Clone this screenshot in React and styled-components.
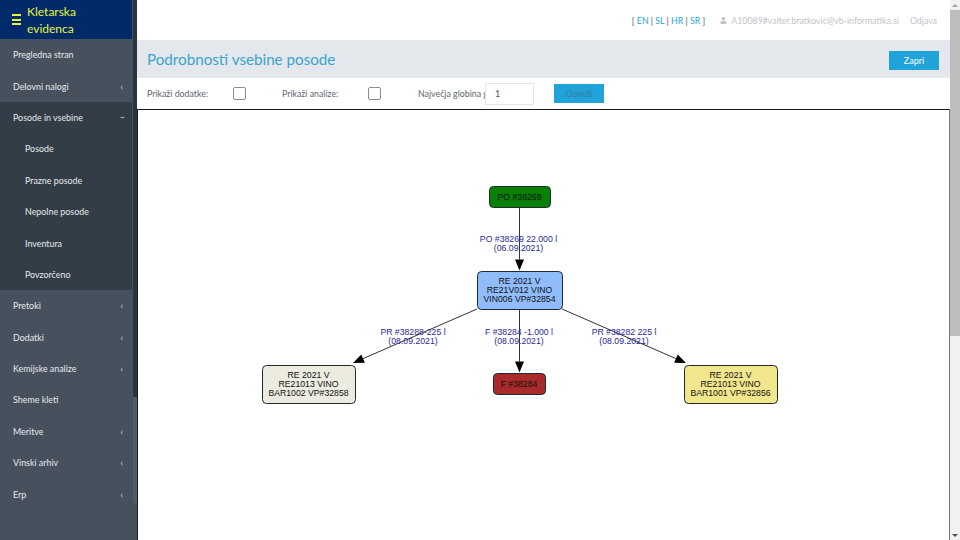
import React from "react";
import styled, { createGlobalStyle } from "styled-components";
import { FaUser } from "react-icons/fa";

const Global = createGlobalStyle`
  html, body {
    margin: 0;
    padding: 0;
    height: 100%;
    overflow: hidden;
    background: #fff;
    font-family: Lato, "Open Sans", "Liberation Sans", sans-serif;
  }
`;

const Page = styled.div`
  width: 960px;
  height: 540px;
  display: flex;
  overflow: hidden;
`;
const Sidebar = styled.aside`
  width: 132px;
  height: 540px;
  flex: none;
  background: #47515e;
  display: flex;
  flex-direction: column;
`;
const Brand = styled.div`
  height: 39px;
  flex: none;
  background: #012a6b;
  display: flex;
  align-items: center;
  gap: 6px;
  padding-left: 12px;
  color: #e8f53a;
  font-size: 12px;
  line-height: 17px;
`;
const Burger = styled.span`
  width: 9px;
  height: 7px;
  border-top: 2px solid #e8f53a;
  border-bottom: 2px solid #e8f53a;
  position: relative;
  &::after {
    content: "";
    position: absolute;
    left: 0;
    right: 0;
    top: 2.5px;
    height: 2px;
    background: #e8f53a;
  }
`;
const Item = styled.div`
  height: 31.4px;
  flex: none;
  display: flex;
  align-items: center;
  justify-content: space-between;
  padding: 0 9px 0 ${(p) => (p.$sub ? "25px" : "13px")};
  color: #e6e9ec;
  font-size: 8.9px;
  background: ${(p) => (p.$dark ? "#333d47" : "transparent")};
`;
const Caret = styled.span`
  font-size: 9px;
  color: #d5d9dd;
  display: inline-block;
  transform: ${(p) => (p.$open ? "rotate(-90deg)" : "none")};
`;
const SideBar = styled.div`
  width: 4px;
  flex: none;
  height: 540px;
  border-left: 1px solid #47515e;
  background: linear-gradient(#2c343d 0, #2c343d 397px, #525c69 397px, #525c69 503px, #47515e 503px);
`;
const Main = styled.main`
  flex: 1;
  min-width: 0;
  display: flex;
  flex-direction: column;
  height: 540px;
`;
const TopBar = styled.header`
  height: 40px;
  flex: none;
  display: flex;
  justify-content: flex-end;
  align-items: center;
  padding-right: 13px;
  font-size: 8.8px;
  color: #bfc4c9;
`;
const Langs = styled.span`
  color: #555;
  margin-right: 15px;
  & a {
    color: #2ba3d4;
  }
`;
const User = styled.span`
  display: flex;
  align-items: center;
  gap: 4px;
  margin-right: 11px;
`;
const TitleBar = styled.div`
  height: 38px;
  flex: none;
  background: #e4e8ec;
  display: flex;
  align-items: center;
  justify-content: space-between;
  padding: 0 11px 0 10px;
`;
const Title = styled.h1`
  margin: 0;
  font-weight: 400;
  font-size: 15.2px;
  color: #3aa3cf;
`;
const CloseButton = styled.button`
  width: 50px;
  height: 19px;
  margin-top: 3px;
  border: 0;
  padding: 0;
  background: #1fa3d8;
  color: #fff;
  font: inherit;
  font-size: 9px;
`;
const Filters = styled.div`
  height: 31px;
  flex: none;
  display: flex;
  align-items: center;
  padding-left: 10px;
  font-size: 8.8px;
  color: #5e666e;
`;
const FilterLabel = styled.span`
  width: ${(p) => p.$w}px;
  flex: none;
  white-space: nowrap;
  overflow: hidden;
`;
const Check = styled.span`
  box-sizing: border-box;
  width: 13px;
  height: 13px;
  flex: none;
  border: 1px solid #8c8c8c;
  border-radius: 2px;
  margin-right: ${(p) => p.$gap}px;
`;
const DepthInput = styled.div`
  box-sizing: border-box;
  width: 49px;
  height: 22px;
  flex: none;
  border: 1px solid #e3e6e8;
  display: flex;
  align-items: center;
  padding-left: 9px;
  color: #555;
  font-size: 9px;
`;
const Refresh = styled.button`
  width: 50px;
  height: 19px;
  margin-left: 20px;
  border: 0;
  padding: 0;
  background: #1fa3d8;
  color: #3d7a9a;
  font: inherit;
  font-size: 9px;
`;
const Canvas = styled.div`
  flex: 1;
  min-height: 0;
  border-top: 1px solid #1c1c1c;
  border-left: 1px solid #1c1c1c;
  border-right: 1px solid #777;
  overflow: hidden;
`;
const PageScroll = styled.div`
  width: 10px;
  height: 540px;
  flex: none;
  background: #f1f1f1;
  display: flex;
  flex-direction: column;
  align-items: center;
`;
const ScrollArrow = styled.div`
  height: 10px;
  flex: none;
  display: flex;
  align-items: center;
  justify-content: center;
  &::before {
    content: "";
    border-left: 3px solid transparent;
    border-right: 3px solid transparent;
    ${(p) => (p.$down ? "border-top" : "border-bottom")}: 3px solid ${(p) => (p.$down ? "#505050" : "#a3a3a3")};
  }
`;
const ScrollThumb = styled.div`
  width: 100%;
  height: 326px;
  flex: none;
  background: #bdbdbd;
`;
const ScrollRest = styled.div`
  flex: 1;
`;

const menu = [
  { label: "Pregledna stran" },
  { label: "Delovni nalogi", caret: true },
  { label: "Posode in vsebine", dark: true, open: true },
  { label: "Posode", sub: true },
  { label: "Prazne posode", sub: true },
  { label: "Nepolne posode", sub: true },
  { label: "Inventura", sub: true },
  { label: "Povzorčeno", sub: true },
  { label: "Pretoki", caret: true },
  { label: "Dodatki", caret: true },
  { label: "Kemijske analize", caret: true },
  { label: "Sheme kleti" },
  { label: "Meritve", caret: true },
  { label: "Vinski arhiv", caret: true },
  { label: "Erp", caret: true },
];

// coordinates are page pixels minus the canvas origin (138, 110)
const nodes = [
  { x: 351, y: 76, w: 61, h: 21, fill: "#078007", lines: ["PO #38269"] },
  { x: 339, y: 161, w: 85, h: 38, fill: "#90bcfb", lines: ["RE 2021 V", "RE21V012 VINO", "VIN006 VP#32854"] },
  { x: 124, y: 255, w: 93, h: 38, fill: "#ebebdf", lines: ["RE 2021 V", "RE21013 VINO", "BAR1002 VP#32858"] },
  { x: 355, y: 263, w: 52, h: 21, fill: "#a82a2a", lines: ["F #38284"] },
  { x: 546, y: 255, w: 93, h: 38, fill: "#f2e68c", lines: ["RE 2021 V", "RE21013 VINO", "BAR1001 VP#32856"] },
];

const edges = [
  { from: [381.5, 97], to: [381.5, 160.5], labelX: 380.5, labelY: 132, lines: ["PO #38269 22.000 l", "(06.09.2021)"] },
  { from: [339, 199], to: [215, 253], labelX: 275, labelY: 225, lines: ["PR #38288-225 l", "(08.09.2021)"] },
  { from: [381.5, 199], to: [381.5, 262.5], labelX: 381, labelY: 225, lines: ["F #38284 -1.000 l", "(08.09.2021)"] },
  { from: [424, 199], to: [548, 253], labelX: 486, labelY: 225, lines: ["PR #38282 225 l", "(08.09.2021)"] },
];

const Arrow = ({ from, to }) => {
  const angle = Math.atan2(to[1] - from[1], to[0] - from[0]);
  const len = 11;
  const side = 4.5;
  const bx = to[0] - Math.cos(angle) * len;
  const by = to[1] - Math.sin(angle) * len;
  const px = -Math.sin(angle) * side;
  const py = Math.cos(angle) * side;
  return (
    <g>
      <line x1={from[0]} y1={from[1]} x2={bx} y2={by} stroke="#333" strokeWidth="1" />
      <polygon points={`${to[0]},${to[1]} ${bx + px},${by + py} ${bx - px},${by - py}`} fill="#000" />
    </g>
  );
};

const Graph = () => (
  <svg width="811" height="430" fontFamily="'Liberation Sans', Arial, sans-serif" fontSize="8.7">
    {edges.map((e) => (
      <Arrow key={e.lines[0]} from={e.from} to={e.to} />
    ))}
    {edges.map((e) => (
      <text key={e.lines[0]} x={e.labelX} y={e.labelY} textAnchor="middle" fill="#2a2a90">
        {e.lines.map((l, i) => (
          <tspan key={l} x={e.labelX} dy={i ? 9.2 : 0}>
            {l}
          </tspan>
        ))}
      </text>
    ))}
    {nodes.map((n) => {
      const top = n.y + n.h / 2 - ((n.lines.length - 1) * 9) / 2 + 3;
      return (
        <g key={n.lines.join()}>
          <rect x={n.x + 0.5} y={n.y + 0.5} width={n.w} height={n.h} rx="4" fill={n.fill} stroke="#1f2a2a" strokeWidth="1" />
          <text textAnchor="middle" fill="#111">
            {n.lines.map((l, i) => (
              <tspan key={l} x={n.x + n.w / 2} y={top + i * 9}>
                {l}
              </tspan>
            ))}
          </text>
        </g>
      );
    })}
  </svg>
);

export default function App() {
  return (
    <Page>
      <Global />
      <Sidebar>
        <Brand>
          <Burger />
          <span>
            Kletarska
            <br />
            evidenca
          </span>
        </Brand>
        {menu.map((m) => (
          <Item key={m.label} $sub={m.sub} $dark={m.dark || m.sub}>
            {m.label}
            {(m.caret || m.open) && <Caret $open={m.open}>‹</Caret>}
          </Item>
        ))}
      </Sidebar>
      <SideBar />
      <Main>
        <TopBar>
          <Langs>
            [ <a>EN</a> | <a>SL</a> | <a>HR</a> | <a>SR</a> ]
          </Langs>
          <User>
            <FaUser size={7} />
            A10089#valter.bratkovic@vb-informatika.si
          </User>
          Odjava
        </TopBar>
        <TitleBar>
          <Title>Podrobnosti vsebine posode</Title>
          <CloseButton>Zapri</CloseButton>
        </TitleBar>
        <Filters>
          <FilterLabel $w={86}>Prikaži dodatke:</FilterLabel>
          <Check $gap={36} />
          <FilterLabel $w={86}>Prikaži analize:</FilterLabel>
          <Check $gap={37} />
          <FilterLabel $w={67}>Največja globina grafa:</FilterLabel>
          <DepthInput>1</DepthInput>
          <Refresh>Osveži</Refresh>
        </Filters>
        <Canvas>
          <Graph />
        </Canvas>
      </Main>
      <PageScroll>
        <ScrollArrow />
        <ScrollThumb />
        <ScrollRest />
        <ScrollArrow $down />
      </PageScroll>
    </Page>
  );
}
